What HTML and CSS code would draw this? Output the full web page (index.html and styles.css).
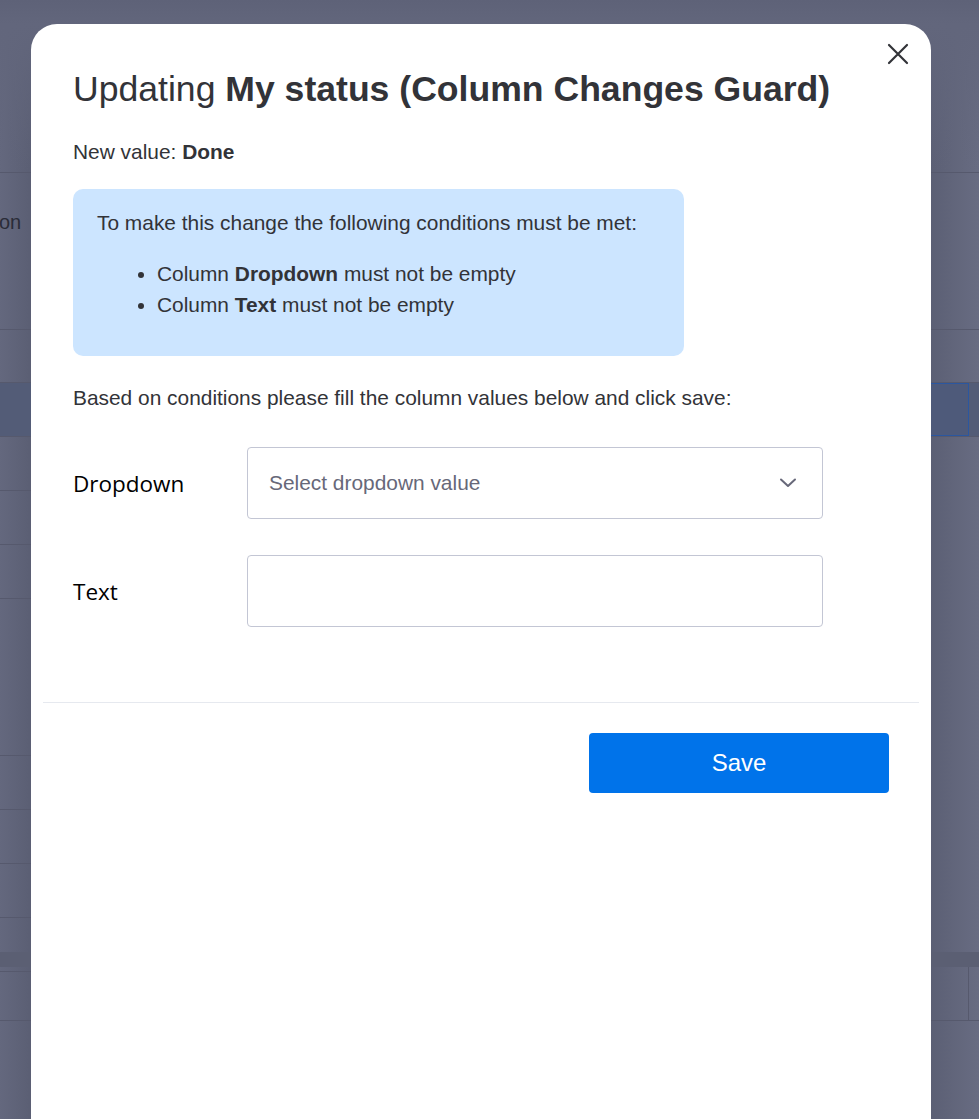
FILE: index.html
```html
<!DOCTYPE html>
<html lang="en">
<head>
<meta charset="utf-8">
<title>Updating My status</title>
<link rel="stylesheet" href="styles.css">
</head>
<body>
<div class="board">
  <div class="row r-head"></div>
  <div class="row r-a"><span class="cell-text">on</span></div>
  <div class="row r-b"></div>
  <div class="row r-sel"><span class="sel-cell"></span></div>
  <div class="row r-n r-short"></div>
  <div class="row r-n r-short"></div>
  <div class="row r-n r-short"></div>
  <div class="row r-big r-short"></div>
  <div class="row r-n r-short"></div>
  <div class="row r-n r-short"></div>
  <div class="row r-n r-short"></div>
  <div class="row r-n r-short"></div>
  <div class="row r-n r-last"><span class="last-cell"></span></div>
</div>

<div class="modal">
  <button class="close" aria-label="Close">
    <svg width="24" height="24" viewBox="0 0 24 24"><path d="M3 3 L21 21 M21 3 L3 21" stroke="#323338" stroke-width="2.2" stroke-linecap="round" fill="none"/></svg>
  </button>
  <div class="modal-body">
    <h1 class="title">Updating <b>My status (Column Changes Guard)</b></h1>
    <p class="new-value">New value: <b>Done</b></p>
    <div class="info">
      <p class="info-lead">To make this change the following conditions must be met:</p>
      <ul class="info-list">
        <li>Column <b>Dropdown</b> must not be empty</li>
        <li>Column <b>Text</b> must not be empty</li>
      </ul>
    </div>
    <p class="hint">Based on conditions please fill the column values below and click save:</p>
    <div class="form">
      <div class="form-row">
        <label class="label">Dropdown</label>
        <div class="field select">
          <span class="placeholder">Select dropdown value</span>
          <svg class="chev" width="18" height="12" viewBox="0 0 18 12"><path d="M2 2.5 L9 9 L16 2.5" stroke="#676879" stroke-width="2" fill="none" stroke-linecap="round" stroke-linejoin="round"/></svg>
        </div>
      </div>
      <div class="form-row">
        <label class="label">Text</label>
        <div class="field"></div>
      </div>
    </div>
  </div>
  <div class="divider"></div>
  <div class="footer">
    <button class="save">Save</button>
  </div>
</div>
</body>
</html>
```

FILE: styles.css
```css
html, body {
  margin: 0;
  padding: 0;
  height: 100%;
  overflow: hidden;
}
body {
  background: linear-gradient(90deg, #64687e 0%, #5b5f74 3%, #62667b 50%, #5b5f74 95%, #686c82 100%);
  font-family: "Liberation Sans", Arial, sans-serif;
  color: #323338;
  position: relative;
}
.board {
  display: flex;
  flex-direction: column;
}
.row {
  border-bottom: 1px solid #56596d;
  position: relative;
}
.r-short { width: 900px; }
.r-head { height: 172px; background: linear-gradient(180deg, #5e6278 0, #62667c 24px, #66698a00 100%); }
.r-a { height: 156px; }
.r-b { height: 52px; }
.r-sel { height: 53px; background: #535c77; }
.r-n { height: 53px; }
.r-big { height: 156px; }
.r-last { border-top: 15px solid #5b5f73; margin-top: -20px; }
.cell-text {
  position: absolute;
  left: -1px;
  top: 38px;
  font-size: 20px;
  color: #2a2c38;
}
.sel-cell {
  position: absolute;
  right: 10px;
  top: 0;
  width: 60px;
  height: 51px;
  border: 1px solid #2b57a0;
  background: #4e5a7a;
}
.last-cell {
  position: absolute;
  right: 10px;
  top: 0;
  width: 60px;
  height: 53px;
  border-right: 1px solid #56596d;
}

.modal {
  position: absolute;
  left: 31px;
  top: 24px;
  width: 900px;
  height: 1120px;
  background: #fff;
  border-radius: 26px 26px 0 0;
  display: flex;
  flex-direction: column;
}
.close {
  position: absolute;
  right: 21px;
  top: 18px;
  width: 24px;
  height: 24px;
  padding: 0;
  border: 0;
  background: transparent;
  display: flex;
}
.modal-body {
  padding: 45px 42px 0 42px;
}
.title {
  margin: 0;
  font-size: 35.6px;
  line-height: 40px;
  font-weight: 400;
}
.title b { font-weight: 700; }
.new-value {
  margin: 31px 0 0 0;
  font-size: 20.9px;
  line-height: 24px;
}
.info {
  margin-top: 25px;
  width: 611px;
  height: 167px;
  box-sizing: border-box;
  background: #cce5ff;
  border-radius: 10px;
  padding: 22px 24px;
}
.info-lead {
  margin: 0;
  font-size: 20.9px;
  line-height: 24px;
}
.info-list {
  margin: 23px 0 0 0;
  padding-left: 60px;
  font-size: 20.9px;
  line-height: 31px;
}
.hint {
  margin: 30px 0 0 0;
  font-size: 20.9px;
  line-height: 24px;
}
.form {
  margin-top: 37px;
  display: flex;
  flex-direction: column;
  gap: 36px;
}
.form-row {
  display: flex;
  align-items: center;
}
.label {
  width: 174px;
  font-family: "Open Sans", "Noto Sans", sans-serif;
  font-size: 22.5px;
  color: #000;
}
.field {
  width: 576px;
  height: 72px;
  box-sizing: border-box;
  border: 1px solid #c3c6d4;
  border-radius: 4px;
}
.select {
  display: flex;
  align-items: center;
  justify-content: space-between;
  padding: 0 25px 0 21px;
}
.placeholder {
  font-size: 20.9px;
  color: #676879;
}
.divider {
  margin: 75px 12px 0 12px;
  height: 1px;
  background: #e6e9ef;
}
.footer {
  display: flex;
  justify-content: flex-end;
  padding: 30px 42px 0 0;
}
.save {
  width: 300px;
  height: 60px;
  border: 0;
  border-radius: 4px;
  background: #0073ea;
  color: #fff;
  font-family: "Liberation Sans", Arial, sans-serif;
  font-size: 24px;
}
```
